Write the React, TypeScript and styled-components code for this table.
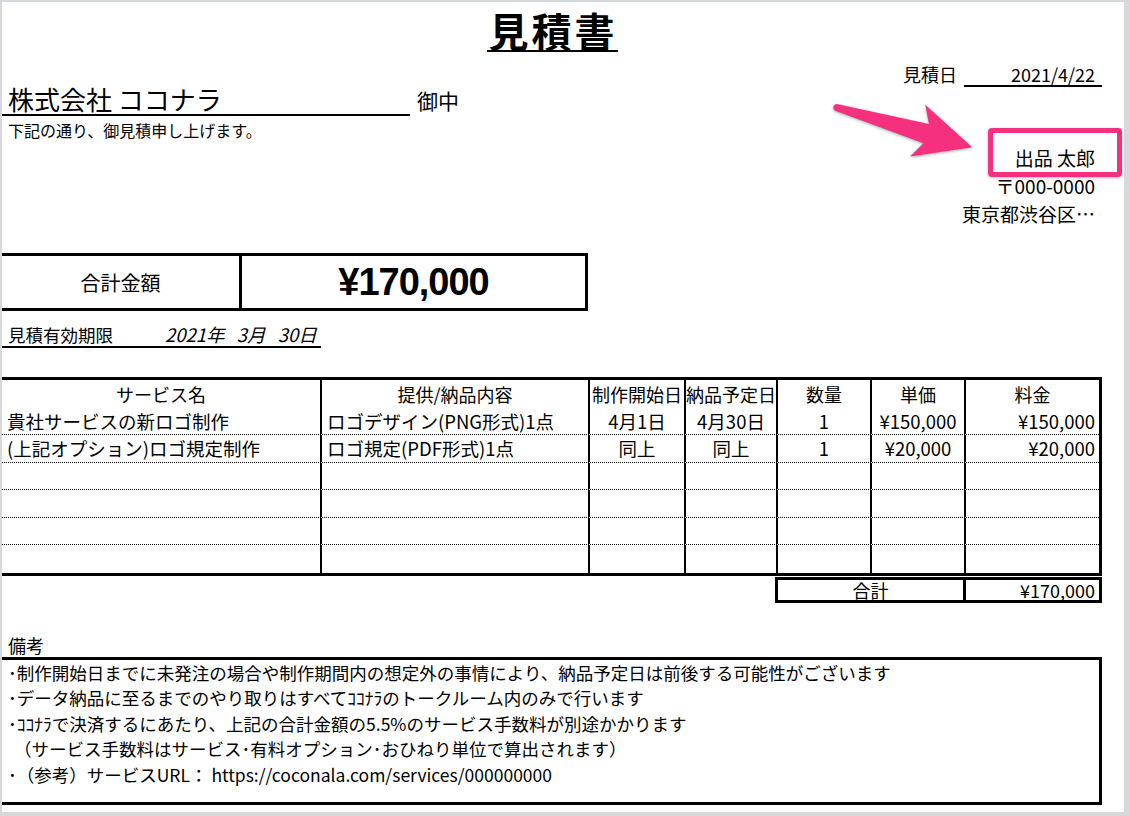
import React from "react";
import styled, { createGlobalStyle } from "styled-components";

const GlobalStyle = createGlobalStyle`
  html, body {
    margin: 0;
    padding: 0;
    background: #d5d9dc;
  }
  body {
    width: 1130px;
    height: 816px;
    overflow: hidden;
    font-family: "Noto Sans CJK JP", "Liberation Sans", sans-serif;
    color: #000;
  }
  * { box-sizing: border-box; }
`;

const PINK = "#f5317f";

const Page = styled.div`
  position: relative;
  width: 1122px;
  height: 810px;
  margin: 2px 0 0 2px;
  background: #fff;
`;

const Sheet = styled.div`
  width: 1100px;
  display: flex;
  flex-direction: column;
`;

const TitleRow = styled.div`
  display: flex;
  justify-content: center;
  padding-top: 7.5px;
`;

const Title = styled.h1`
  margin: 0;
  padding-left: 2px;
  font-size: 40px;
  font-weight: 700;
  letter-spacing: 3px;
  line-height: 40px;
  border-bottom: 2px solid #000;
`;

const Header = styled.div`
  display: flex;
  justify-content: space-between;
  align-items: flex-start;
`;

const Client = styled.div`
  display: flex;
  flex-direction: column;
  padding-top: 31.5px;
`;

const ClientRow = styled.div`
  display: flex;
  align-items: flex-end;
`;

const ClientName = styled.div`
  width: 408px;
  padding-left: 6px;
  font-size: 26px;
  line-height: 31px;
  border-bottom: 2px solid #000;
`;

const Honorific = styled.span`
  margin: 0 0 4px 7px;
  font-size: 21px;
  line-height: 24px;
`;

const Greeting = styled.p`
  margin: 4px 0 0;
  padding-left: 6px;
  font-size: 16px;
  line-height: 20px;
`;

const Issuer = styled.div`
  display: flex;
  flex-direction: column;
  align-items: flex-end;
  padding-top: 11.5px;
`;

const DateRow = styled.div`
  display: flex;
  align-items: baseline;
  font-size: 18px;
  line-height: 22px;
`;

const DateLabel = styled.span`
  margin-right: 7px;
`;

const DateValue = styled.span`
  width: 138px;
  text-align: right;
  padding-right: 7px;
  border-bottom: 2px solid #000;
`;

const IssuerLines = styled.div`
  margin-top: 57px;
  padding-right: 7px;
  text-align: right;
  font-size: 19px;
  line-height: 28px;
`;

const TotalBox = styled.div`
  margin-top: 25px;
  width: 586px;
  height: 58px;
  display: grid;
  grid-template-columns: 240px 1fr;
  border: 3px solid #000;
  border-left: none;
`;

const TotalLabel = styled.div`
  display: flex;
  align-items: center;
  justify-content: center;
  border-right: 3px solid #000;
  font-size: 20px;
`;

const TotalAmount = styled.div`
  display: flex;
  align-items: center;
  justify-content: center;
  font-family: "Liberation Sans", sans-serif;
  font-weight: 700;
  font-size: 38px;
  letter-spacing: -1px;
`;

const Validity = styled.div`
  margin-top: 12px;
  width: 319px;
  display: grid;
  grid-template-columns: 163px 1fr;
  align-items: baseline;
  border-bottom: 2px solid #000;
  font-size: 17.5px;
  line-height: 22px;
`;

const ValidityLabel = styled.span`
  padding-left: 6px;
`;

const ValidityDate = styled.span`
  font-style: italic;
  font-size: 18.5px;
  word-spacing: 8px;
`;

const Table = styled.div`
  margin-top: 29px;
  border-top: 3px solid #000;
  border-right: 3px solid #000;
  border-bottom: 3px solid #000;
`;

const Row = styled.div<{ $dotted?: boolean }>`
  display: grid;
  grid-template-columns: 320px 268px 96px 92px 94px 94px 1fr;
  height: 27.5px;
  border-bottom: ${(p) => (p.$dotted ? "1px dotted #000" : "none")};
  font-size: 18.5px;
`;

type Align = "left" | "center" | "right";

const Cell = styled.div<{ $align: Align }>`
  display: flex;
  align-items: center;
  justify-content: ${(p) =>
    p.$align === "left" ? "flex-start" : p.$align === "right" ? "flex-end" : "center"};
  padding: 0 ${(p) => (p.$align === "right" ? "4px" : "0")} 0
    ${(p) => (p.$align === "left" ? "5px" : "0")};
  border-right: 2px solid #000;
  white-space: nowrap;
  line-height: 1;
  &:last-child {
    border-right: none;
  }
`;

const HeadCell = styled(Cell)`
  font-size: 18px;
`;

const SumBox = styled.div`
  margin: 1px 0 0 773px;
  width: 327px;
  height: 26px;
  display: grid;
  grid-template-columns: 188px 1fr;
  border: 3px solid #000;
  font-size: 18px;
  line-height: 1;
`;

const SumLabel = styled.div`
  display: flex;
  align-items: center;
  justify-content: center;
  border-right: 3px solid #000;
`;

const SumValue = styled.div`
  display: flex;
  align-items: center;
  justify-content: flex-end;
  padding-right: 4px;
`;

const NotesLabel = styled.div`
  margin-top: 31px;
  padding-left: 6px;
  font-size: 18px;
  line-height: 23px;
`;

const NotesBox = styled.div`
  border-top: 3px solid #000;
  border-right: 3px solid #000;
  border-bottom: 3px solid #000;
  padding: 0 0 15px 6px;
  font-size: 17.5px;
  line-height: 25.5px;
`;

const NoteLine = styled.div<{ $indent?: boolean }>`
  padding-left: ${(p) => (p.$indent ? "6px" : "0")};
  white-space: nowrap;
`;

const Highlight = styled.div`
  position: absolute;
  left: 986px;
  top: 126px;
  width: 134px;
  height: 49px;
  border: 5px solid ${PINK};
  border-radius: 4px;
  box-shadow: 0 1px 3px rgba(0, 0, 0, 0.25);
`;

const ArrowSvg = styled.svg`
  position: absolute;
  left: 820px;
  top: 85px;
  width: 170px;
  height: 90px;
  overflow: visible;
  filter: drop-shadow(0 1px 1.5px rgba(0, 0, 0, 0.35));
`;

const aligns: Align[] = ["left", "left", "center", "center", "center", "center", "right"];

const headers = ["サービス名", "提供/納品内容", "制作開始日", "納品予定日", "数量", "単価", "料金"];

const rows: string[][] = [
  ["貴社サービスの新ロゴ制作", "ロゴデザイン(PNG形式)1点", "4月1日", "4月30日", "1", "¥150,000", "¥150,000"],
  ["(上記オプション)ロゴ規定制作", "ロゴ規定(PDF形式)1点", "同上", "同上", "1", "¥20,000", "¥20,000"],
  ["", "", "", "", "", "", ""],
  ["", "", "", "", "", "", ""],
  ["", "", "", "", "", "", ""],
  ["", "", "", "", "", "", ""],
];

const notes: { text: string; indent?: boolean }[] = [
  { text: "･制作開始日までに未発注の場合や制作期間内の想定外の事情により、納品予定日は前後する可能性がございます" },
  { text: "･データ納品に至るまでのやり取りはすべてｺｺﾅﾗのトークルーム内のみで行います" },
  { text: "･ｺｺﾅﾗで決済するにあたり、上記の合計金額の5.5%のサービス手数料が別途かかります" },
  { text: "（サービス手数料はサービス･有料オプション･おひねり単位で算出されます）", indent: true },
  { text: "･（参考）サービスURL： https://coconala.com/services/000000000" },
];

export default function App() {
  return (
    <>
      <GlobalStyle />
      <Page>
        <Sheet>
          <TitleRow>
            <Title>見積書</Title>
          </TitleRow>
          <Header>
            <Client>
              <ClientRow>
                <ClientName>株式会社 ココナラ</ClientName>
                <Honorific>御中</Honorific>
              </ClientRow>
              <Greeting>下記の通り、御見積申し上げます。</Greeting>
            </Client>
            <Issuer>
              <DateRow>
                <DateLabel>見積日</DateLabel>
                <DateValue>2021/4/22</DateValue>
              </DateRow>
              <IssuerLines>
                <div>出品 太郎</div>
                <div>〒000-0000</div>
                <div>東京都渋谷区…</div>
              </IssuerLines>
            </Issuer>
          </Header>
          <TotalBox>
            <TotalLabel>合計金額</TotalLabel>
            <TotalAmount>¥170,000</TotalAmount>
          </TotalBox>
          <Validity>
            <ValidityLabel>見積有効期限</ValidityLabel>
            <ValidityDate>2021年 3月 30日</ValidityDate>
          </Validity>
          <Table>
            <Row>
              {headers.map((h, i) => (
                <HeadCell key={i} $align="center">
                  {h}
                </HeadCell>
              ))}
            </Row>
            {rows.map((r, ri) => (
              <Row key={ri} $dotted={ri < rows.length - 1}>
                {r.map((c, ci) => (
                  <Cell key={ci} $align={aligns[ci]}>
                    {c}
                  </Cell>
                ))}
              </Row>
            ))}
          </Table>
          <SumBox>
            <SumLabel>合計</SumLabel>
            <SumValue>¥170,000</SumValue>
          </SumBox>
          <NotesLabel>備考</NotesLabel>
          <NotesBox>
            {notes.map((n, i) => (
              <NoteLine key={i} $indent={n.indent}>
                {n.text}
              </NoteLine>
            ))}
          </NotesBox>
        </Sheet>
        <ArrowSvg viewBox="822 87 170 90">
          <path
            transform="translate(835 107) rotate(16.3)"
            d="M2,-3.5 L95,-10 L86,-27.5 L143,0 L86,26.5 L95,10 L2,3.5 A3.5,3.5 0 0 1 2,-3.5 Z"
            fill={PINK}
          />
        </ArrowSvg>
        <Highlight />
      </Page>
    </>
  );
}
